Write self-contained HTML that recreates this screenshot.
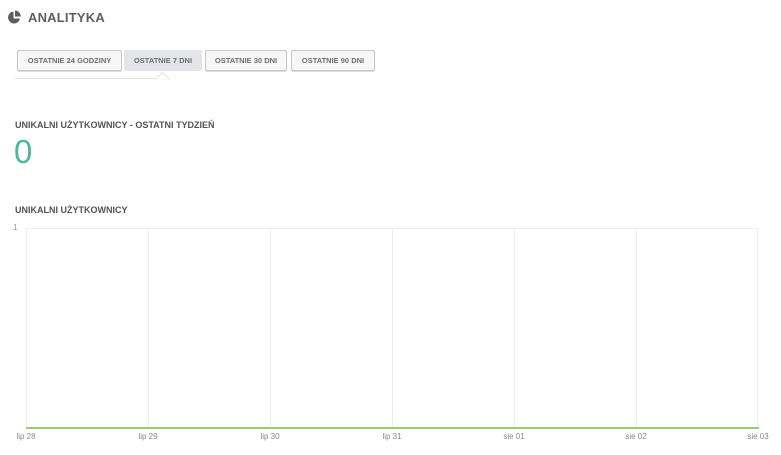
<!DOCTYPE html>
<html><head><meta charset="utf-8"><style>
body{margin:0;width:781px;height:455px;background:#fff;font-family:"Liberation Sans",sans-serif;position:relative;overflow:hidden;color:#555a60}
.abs{position:absolute}
.title{left:28px;top:10px;font-size:13px;font-weight:bold;color:#5a5f66;letter-spacing:0.2px}
.btn{position:absolute;top:50px;height:19px;border:1px solid #c8c8c8;border-radius:2px;background:#f7f7f7;font-size:7.5px;font-weight:bold;color:#6a6e73;text-align:center;line-height:19px;box-sizing:content-box;box-shadow:0 1px 0 #ddd}
.btn.act{background:#e4e5e8;border-color:#e4e5e8;box-shadow:none}
.h{font-size:9px;font-weight:bold;color:#4f545a}
.lbl{position:absolute;top:432px;font-size:8px;color:#888;width:40px;text-align:center}
</style></head><body>
<svg class="abs" style="left:7px;top:10px" width="15" height="15" viewBox="0 0 15 15"><path d="M6.5 1.5A6 6 0 1 0 13 8.5H6.5Z" fill="#5a5f66"/><path d="M8 0.5A6 6 0 0 1 13.8 6.5H8Z" fill="#5a5f66"/></svg>
<div class="abs title">ANALITYKA</div>
<div class="btn" style="left:17px;width:103px">OSTATNIE 24 GODZINY</div>
<div class="btn act" style="left:124px;width:76px">OSTATNIE 7 DNI</div>
<div class="btn" style="left:205px;width:80px">OSTATNIE 30 DNI</div>
<div class="btn" style="left:291px;width:82px">OSTATNIE 90 DNI</div>
<div class="abs" style="left:15px;top:78px;width:141px;height:1px;background:#e2e2e2"></div>
<svg class="abs" style="left:155px;top:72px" width="16" height="8"><path d="M0 7.5L7.5 0.5L15 7.5" fill="none" stroke="#e2e2e2"/></svg>
<div class="abs h" style="left:15px;top:120px">UNIKALNI UŻYTKOWNICY - OSTATNI TYDZIEŃ</div>
<div class="abs" style="left:14px;top:133px;font-size:33px;color:#4db6a0;font-weight:300">0</div>
<div class="abs h" style="left:15px;top:205px">UNIKALNI UŻYTKOWNICY</div>
<div class="abs" style="left:13px;top:223px;font-size:8px;color:#999">1</div>
<div class="abs" style="left:26px;top:228px;width:732px;height:200px;border-top:1px solid #ececec;border-right:1px solid #ececec;box-sizing:border-box"></div>
<div class="abs" style="left:26px;top:228px;width:1px;height:200px;background:#ececec"></div>
<div class="abs" style="left:148px;top:228px;width:1px;height:200px;background:#ececec"></div>
<div class="abs" style="left:270px;top:228px;width:1px;height:200px;background:#ececec"></div>
<div class="abs" style="left:392px;top:228px;width:1px;height:200px;background:#ececec"></div>
<div class="abs" style="left:514px;top:228px;width:1px;height:200px;background:#ececec"></div>
<div class="abs" style="left:636px;top:228px;width:1px;height:200px;background:#ececec"></div>
<div class="abs" style="left:26px;top:427px;width:733px;height:2px;background:#9ccc65"></div>
<div class="lbl" style="left:6px">lip 28</div>
<div class="lbl" style="left:128px">lip 29</div>
<div class="lbl" style="left:250px">lip 30</div>
<div class="lbl" style="left:372px">lip 31</div>
<div class="lbl" style="left:494px">sie 01</div>
<div class="lbl" style="left:616px">sie 02</div>
<div class="lbl" style="left:738px">sie 03</div>
</body></html>
